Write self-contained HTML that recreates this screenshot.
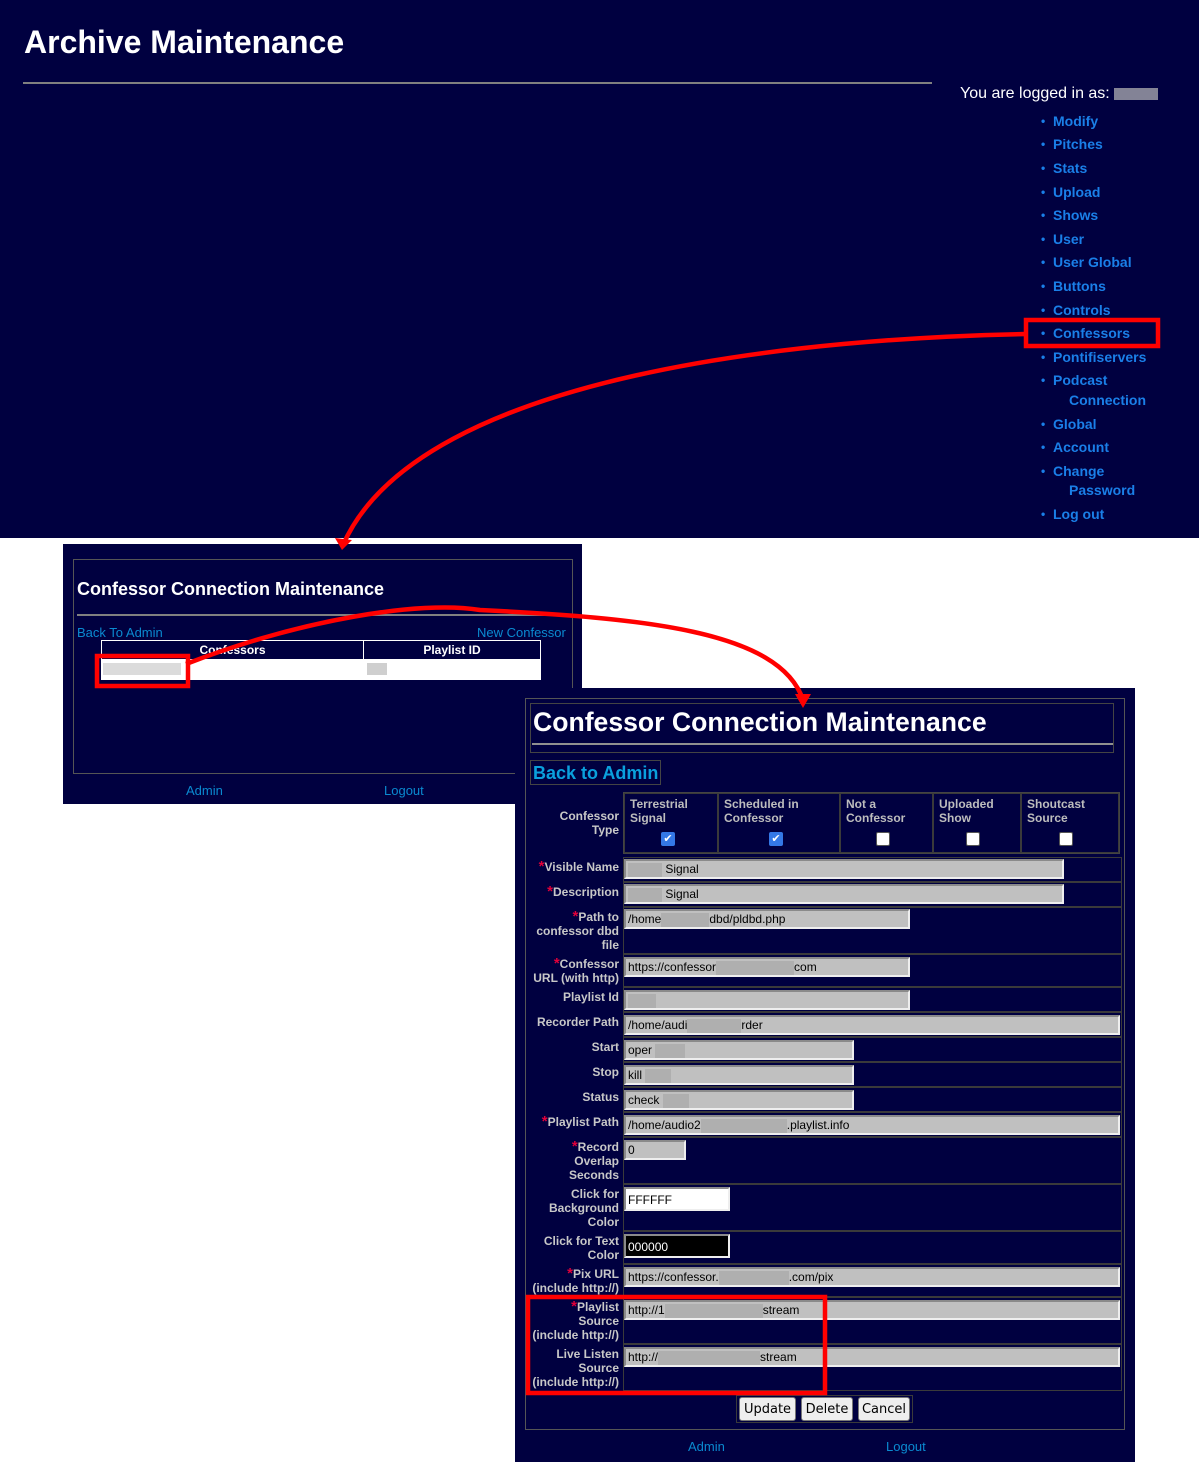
<!DOCTYPE html>
<html><head><meta charset="utf-8"><style>
*{margin:0;padding:0;box-sizing:border-box}
body{width:1199px;height:1462px;position:relative;background:#fff;font-family:"Liberation Sans",Arial,sans-serif;overflow:hidden}
.a{position:absolute}
.nav{background:#000040}
.m{position:absolute;left:1053px;color:#1a7fe8;font-weight:bold;font-size:14px;line-height:16px;white-space:nowrap}
.m:before{content:"•";position:absolute;left:-12px;font-size:12px}
.m.nb:before{content:""}
.lbl{position:absolute;right:580px;text-align:right;color:#c8c8c8;font-weight:bold;font-size:12px;line-height:14px;white-space:nowrap}
.lbl b{color:#e0003a;font-size:15px;line-height:10px}
.cell{position:absolute;left:623px;width:499px;border:1px solid #3a3a3a}
.in{position:absolute;background:#c0c0c0;border:2px solid;border-color:#8a8a8a #eee #eee #8a8a8a;font-size:12px;line-height:16px;color:#000;padding-left:2px;white-space:nowrap;overflow:hidden}
.bl{display:inline-block;background:#a8a8a8;height:14px;vertical-align:middle;opacity:.7}
.cb{position:absolute;width:14px;height:14px;border-radius:2px}
.cb.on{background:#3478e6}
.cb.off{background:#fff;border:1px solid #555}
.ck{border:1px solid #3a3a3a;position:absolute;color:#bdbdbd;font-weight:bold;font-size:12px;line-height:14px;padding:3px 5px}
.btn{position:absolute;top:1397px;height:24px;background:#eee;border:1px solid #777;border-radius:3px;font-family:"DejaVu Sans",sans-serif;font-size:13px;line-height:24px;text-align:center;color:#000}
</style></head><body>
<div class="a nav" style="left:0;top:0;width:1199px;height:538px"></div>
<div class="a" style="left:24px;top:22px;color:#fff;font-weight:bold;font-size:32px;line-height:40px">Archive Maintenance</div>
<div class="a" style="left:23px;top:82px;width:909px;height:2px;background:#808080"></div>
<div class="a" style="left:960px;top:84px;color:#fff;font-size:16px;line-height:20px">You are logged in as: <span class="bl" style="width:44px;height:12px;background:#bbb"></span></div>
<div class="m" style="top:113px">Modify</div>
<div class="m" style="top:136px">Pitches</div>
<div class="m" style="top:160px">Stats</div>
<div class="m" style="top:184px">Upload</div>
<div class="m" style="top:207px">Shows</div>
<div class="m" style="top:231px">User</div>
<div class="m" style="top:254px">User Global</div>
<div class="m" style="top:278px">Buttons</div>
<div class="m" style="top:302px">Controls</div>
<div class="m" style="top:325px">Confessors</div>
<div class="m" style="top:349px">Pontifiservers</div>
<div class="m" style="top:372px">Podcast</div>
<div class="m nb" style="top:392px;left:1069px">Connection</div>
<div class="m" style="top:416px">Global</div>
<div class="m" style="top:439px">Account</div>
<div class="m" style="top:463px">Change</div>
<div class="m nb" style="top:482px;left:1069px">Password</div>
<div class="m" style="top:506px">Log out</div>

<!-- panel 1 -->
<div class="a nav" style="left:63px;top:544px;width:519px;height:260px"></div>
<div class="a" style="left:73px;top:559px;width:500px;height:215px;border:1px solid #555"></div>
<div class="a" style="left:77px;top:578px;color:#fff;font-weight:bold;font-size:18px;line-height:22px">Confessor Connection Maintenance</div>
<div class="a" style="left:77px;top:614px;width:492px;height:2px;background:#808080"></div>
<div class="a" style="left:77px;top:625px;color:#0a8ad0;font-size:13px">Back To Admin</div>
<div class="a" style="left:477px;top:625px;color:#0a8ad0;font-size:13px">New Confessor</div>
<div class="a" style="left:101px;top:640px;width:440px;height:40px;border:1px solid #fff;background:#fff"></div>
<div class="a" style="left:102px;top:641px;width:261px;height:18px;background:#000040;color:#fff;font-weight:bold;font-size:12px;line-height:18px;text-align:center">Confessors</div>
<div class="a" style="left:364px;top:641px;width:176px;height:18px;background:#000040;color:#fff;font-weight:bold;font-size:12px;line-height:18px;text-align:center">Playlist ID</div>
<div class="a bl" style="left:103px;top:663px;width:78px;height:12px;background:#ccc"></div>
<div class="a bl" style="left:367px;top:663px;width:20px;height:12px;background:#bbb"></div>
<div class="a" style="left:186px;top:783px;color:#0a8ad0;font-size:13px">Admin</div>
<div class="a" style="left:384px;top:783px;color:#0a8ad0;font-size:13px">Logout</div>

<!-- panel 2 -->
<div class="a nav" style="left:515px;top:688px;width:620px;height:774px"></div>
<div class="a" style="left:525px;top:698px;width:600px;height:732px;border:1px solid #555"></div>
<div class="a" style="left:530px;top:703px;width:584px;height:50px;border:1px solid #444"></div>
<div class="a" style="left:533px;top:706px;color:#fff;font-weight:bold;font-size:26.6px;line-height:32px">Confessor Connection Maintenance</div>
<div class="a" style="left:532px;top:743px;width:581px;height:2px;background:#909090"></div>
<div class="a" style="left:530px;top:760px;width:131px;height:25px;border:1px solid #444"></div>
<div class="a" style="left:533px;top:762px;color:#0aa0dd;font-weight:bold;font-size:18px;line-height:22px">Back to Admin</div>

<div class="lbl" style="top:809px">Confessor<br>Type</div>
<div class="a" style="left:623px;top:792px;width:497px;height:62px;border:1px solid #444"></div>
<div class="ck" style="left:624px;top:793px;width:94px;height:60px">Terrestrial<br>Signal</div>
<div class="ck" style="left:718px;top:793px;width:122px;height:60px">Scheduled in<br>Confessor</div>
<div class="ck" style="left:840px;top:793px;width:93px;height:60px">Not a<br>Confessor</div>
<div class="ck" style="left:933px;top:793px;width:88px;height:60px">Uploaded<br>Show</div>
<div class="ck" style="left:1021px;top:793px;width:98px;height:60px">Shoutcast<br>Source</div>
<div class="cb on" style="left:661px;top:832px;color:#fff;font-size:11px;line-height:14px;text-align:center">✔</div>
<div class="cb on" style="left:769px;top:832px;color:#fff;font-size:11px;line-height:14px;text-align:center">✔</div>
<div class="cb off" style="left:876px;top:832px"></div>
<div class="cb off" style="left:966px;top:832px"></div>
<div class="cb off" style="left:1059px;top:832px"></div>

<div class="lbl" style="top:860px"><b>*</b>Visible Name</div>
<div class="cell" style="top:857px;height:25px"></div>
<div class="in" style="left:624px;top:859px;width:440px;height:20px"><span class="bl" style="width:34px"></span> Signal</div>
<div class="lbl" style="top:885px"><b>*</b>Description</div>
<div class="cell" style="top:882px;height:25px"></div>
<div class="in" style="left:624px;top:884px;width:440px;height:20px"><span class="bl" style="width:34px"></span> Signal</div>
<div class="lbl" style="top:910px"><b>*</b>Path to<br>confessor dbd<br>file</div>
<div class="cell" style="top:907px;height:47px"></div>
<div class="in" style="left:624px;top:909px;width:286px;height:20px">/home<span class="bl" style="width:48px"></span>dbd/pldbd.php</div>
<div class="lbl" style="top:957px"><b>*</b>Confessor<br>URL (with http)</div>
<div class="cell" style="top:954px;height:33px"></div>
<div class="in" style="left:624px;top:957px;width:286px;height:20px">https://confessor<span class="bl" style="width:78px"></span>com</div>
<div class="lbl" style="top:990px">Playlist Id</div>
<div class="cell" style="top:987px;height:25px"></div>
<div class="in" style="left:624px;top:990px;width:286px;height:20px"><span class="bl" style="width:28px"></span></div>
<div class="lbl" style="top:1015px">Recorder Path</div>
<div class="cell" style="top:1012px;height:25px"></div>
<div class="in" style="left:624px;top:1015px;width:496px;height:20px">/home/audi<span class="bl" style="width:54px"></span>rder</div>
<div class="lbl" style="top:1040px">Start</div>
<div class="cell" style="top:1037px;height:25px"></div>
<div class="in" style="left:624px;top:1040px;width:230px;height:20px">oper <span class="bl" style="width:30px"></span></div>
<div class="lbl" style="top:1065px">Stop</div>
<div class="cell" style="top:1062px;height:25px"></div>
<div class="in" style="left:624px;top:1065px;width:230px;height:20px">kill <span class="bl" style="width:26px"></span></div>
<div class="lbl" style="top:1090px">Status</div>
<div class="cell" style="top:1087px;height:25px"></div>
<div class="in" style="left:624px;top:1090px;width:230px;height:20px">check <span class="bl" style="width:26px"></span></div>
<div class="lbl" style="top:1115px"><b>*</b>Playlist Path</div>
<div class="cell" style="top:1112px;height:25px"></div>
<div class="in" style="left:624px;top:1115px;width:496px;height:20px">/home/audio2<span class="bl" style="width:86px"></span>.playlist.info</div>
<div class="lbl" style="top:1140px"><b>*</b>Record<br>Overlap<br>Seconds</div>
<div class="cell" style="top:1137px;height:47px"></div>
<div class="in" style="left:624px;top:1140px;width:62px;height:20px">0</div>
<div class="lbl" style="top:1187px">Click for<br>Background<br>Color</div>
<div class="cell" style="top:1184px;height:47px"></div>
<div class="in" style="left:624px;top:1187px;width:106px;height:24px;background:#fff;line-height:22px">FFFFFF</div>
<div class="lbl" style="top:1234px">Click for Text<br>Color</div>
<div class="cell" style="top:1231px;height:33px"></div>
<div class="in" style="left:624px;top:1234px;width:106px;height:24px;background:#000;color:#fff;line-height:22px">000000</div>
<div class="lbl" style="top:1267px"><b>*</b>Pix URL<br>(include http://)</div>
<div class="cell" style="top:1264px;height:33px"></div>
<div class="in" style="left:624px;top:1267px;width:496px;height:20px">https://confessor.<span class="bl" style="width:70px"></span>.com/pix</div>
<div class="lbl" style="top:1300px"><b>*</b>Playlist<br>Source<br>(include http://)</div>
<div class="cell" style="top:1297px;height:47px"></div>
<div class="in" style="left:624px;top:1300px;width:496px;height:20px">http://1<span class="bl" style="width:98px"></span>stream</div>
<div class="lbl" style="top:1347px">Live Listen<br>Source<br>(include http://)</div>
<div class="cell" style="top:1344px;height:47px"></div>
<div class="in" style="left:624px;top:1347px;width:496px;height:20px">http://<span class="bl" style="width:102px"></span>stream</div>
<div class="a" style="left:736px;top:1395px;width:177px;height:28px;border:1px solid #3a3a3a"></div>
<div class="btn" style="left:739px;width:57px">Update</div>
<div class="btn" style="left:801px;width:52px">Delete</div>
<div class="btn" style="left:858px;width:52px">Cancel</div>
<div class="a" style="left:688px;top:1439px;color:#0a8ad0;font-size:13px">Admin</div>
<div class="a" style="left:886px;top:1439px;color:#0a8ad0;font-size:13px">Logout</div>

<svg class="a" style="left:0;top:0" width="1199" height="1462" viewBox="0 0 1199 1462">
<g fill="none" stroke="#f00" stroke-width="4.5">
<rect x="1026" y="320" width="132" height="26"/>
<rect x="97" y="656" width="91" height="30"/>
<rect x="528" y="1297" width="297" height="96"/>
<path d="M1026,334 C820,338 420,370 343,545"/>
<path d="M186,664 C300,620 420,600 480,610 C640,618 780,630 803,700"/>
</g>
<g fill="#f00">
<polygon points="335,538 352,540 342,550"/>
<polygon points="795,694 811,694 803,708"/>
</g>
</svg>
</body></html>
